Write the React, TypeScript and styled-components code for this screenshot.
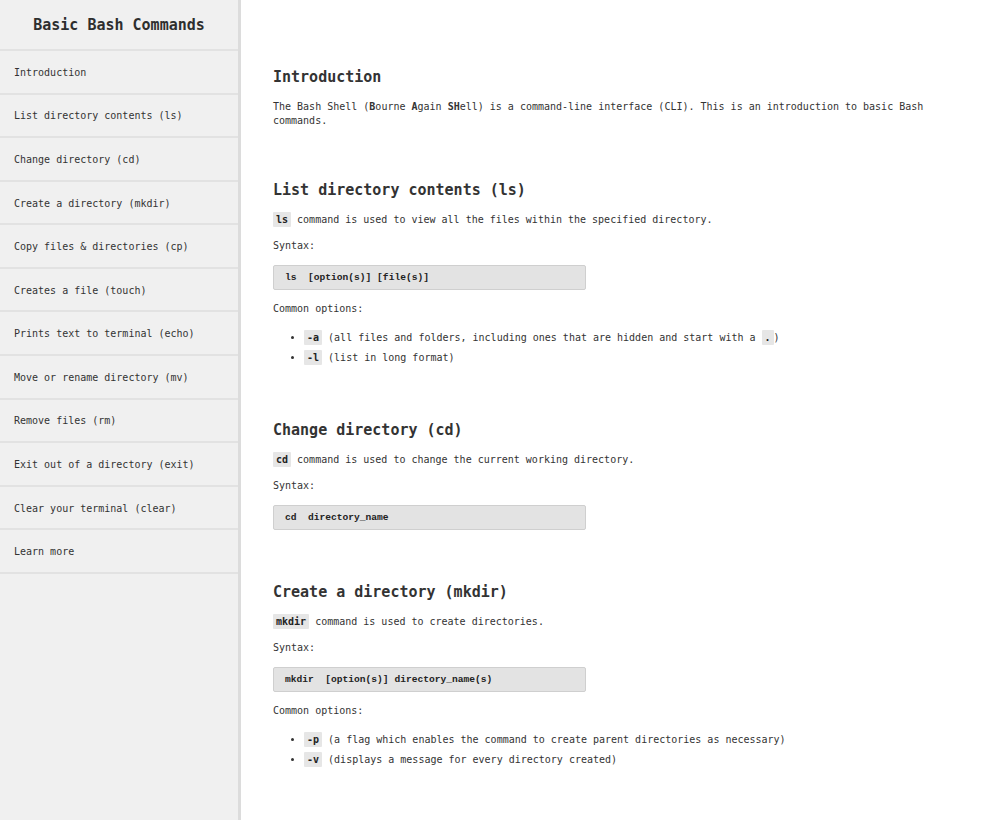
import React from "react";
import styled, { createGlobalStyle } from "styled-components";

const Global = createGlobalStyle`
  html, body { margin: 0; padding: 0; background: #ffffff; }
  body {
    font-family: "DejaVu Sans Mono", "Liberation Mono", monospace;
    color: #333333;
  }
  * { box-sizing: border-box; }
`;

const Page = styled.div`
  display: flex;
  min-height: 820px;
  width: 1000px;
`;

const Sidebar = styled.nav`
  flex: 0 0 241px;
  width: 241px;
  min-height: 820px;
  background: #f0f0f0;
  border-right: 3px solid #dcdcdc;
  display: flex;
  flex-direction: column;
`;

const SideTitle = styled.header`
  height: 51px;
  display: flex;
  align-items: center;
  justify-content: center;
  padding-top: 1px;
  font-size: 15px;
  font-weight: bold;
  color: #2e2e2e;
  border-bottom: 2px solid #e2e2e2;
`;

const NavList = styled.ul`
  list-style: none;
  margin: 0;
  padding: 0;
`;

const NavItem = styled.li`
  height: 43.58px;
  display: flex;
  align-items: center;
  padding: 1px 14px 0;
  font-size: 10px;
  color: #333333;
  border-bottom: 2px solid #e2e2e2;
`;

const Main = styled.main`
  flex: 1;
  padding: 67px 40px 40px 32px;
  display: flex;
  flex-direction: column;
  gap: 52px;
`;

const Section = styled.section`
  display: flex;
  flex-direction: column;
  gap: 12px;
`;

const Heading = styled.h2`
  margin: 0 0 1px 0;
  font-size: 15px;
  line-height: 20px;
  font-weight: bold;
  color: #333333;
`;

const Para = styled.p`
  margin: 0;
  font-size: 10px;
  line-height: 14px;
  color: #333333;
`;

const Strong = styled.strong`
  font-weight: bold;
`;

const Code = styled.code`
  font-family: "DejaVu Sans Mono", monospace;
  font-weight: bold;
  font-size: 10px;
  background: #e6e6e6;
  padding: 2px 3px;
  color: #222222;
  border-radius: 1px;
`;

const Pre = styled.pre`
  margin: 0;
  width: 313px;
  height: 25px;
  display: flex;
  align-items: center;
  padding: 0 11px;
  background: #e3e3e3;
  border: 1px solid #cfcfcf;
  border-radius: 2px;
  font-family: "Liberation Mono", "Courier New", monospace;
  font-weight: bold;
  font-size: 9.6px;
  color: #222222;
  white-space: pre;
`;

const Options = styled.ul`
  margin: 0;
  padding-left: 31px;
  font-size: 10px;
  line-height: 20px;
`;

const Option = styled.li`
  color: #333333;
`;

const navItems = [
  "Introduction",
  "List directory contents (ls)",
  "Change directory (cd)",
  "Create a directory (mkdir)",
  "Copy files & directories (cp)",
  "Creates a file (touch)",
  "Prints text to terminal (echo)",
  "Move or rename directory (mv)",
  "Remove files (rm)",
  "Exit out of a directory (exit)",
  "Clear your terminal (clear)",
  "Learn more",
];

export default function App() {
  return (
    <>
      <Global />
      <Page>
        <Sidebar>
          <SideTitle>Basic Bash Commands</SideTitle>
          <NavList>
            {navItems.map((n) => (
              <NavItem key={n}>{n}</NavItem>
            ))}
          </NavList>
        </Sidebar>
        <Main>
          <Section>
            <Heading>Introduction</Heading>
            <Para>
              The Bash Shell (<Strong>B</Strong>ourne <Strong>A</Strong>gain{" "}
              <Strong>SH</Strong>ell) is a command-line interface (CLI). This is
              an introduction to basic Bash commands.
            </Para>
          </Section>
          <Section>
            <Heading>List directory contents (ls)</Heading>
            <Para>
              <Code>ls</Code> command is used to view all the files within the
              specified directory.
            </Para>
            <Para>Syntax:</Para>
            <Pre>{"ls  [option(s)] [file(s)]"}</Pre>
            <Para>Common options:</Para>
            <Options>
              <Option>
                <Code>-a</Code> (all files and folders, including ones that are
                hidden and start with a <Code>.</Code>)
              </Option>
              <Option>
                <Code>-l</Code> (list in long format)
              </Option>
            </Options>
          </Section>
          <Section>
            <Heading>Change directory (cd)</Heading>
            <Para>
              <Code>cd</Code> command is used to change the current working
              directory.
            </Para>
            <Para>Syntax:</Para>
            <Pre>{"cd  directory_name"}</Pre>
          </Section>
          <Section>
            <Heading>Create a directory (mkdir)</Heading>
            <Para>
              <Code>mkdir</Code> command is used to create directories.
            </Para>
            <Para>Syntax:</Para>
            <Pre>{"mkdir  [option(s)] directory_name(s)"}</Pre>
            <Para>Common options:</Para>
            <Options>
              <Option>
                <Code>-p</Code> (a flag which enables the command to create
                parent directories as necessary)
              </Option>
              <Option>
                <Code>-v</Code> (displays a message for every directory created)
              </Option>
            </Options>
          </Section>
        </Main>
      </Page>
    </>
  );
}
